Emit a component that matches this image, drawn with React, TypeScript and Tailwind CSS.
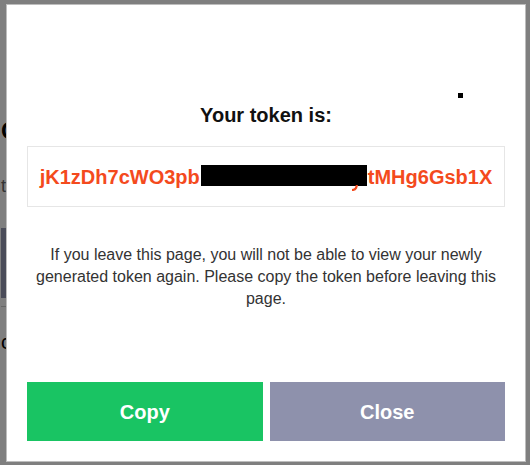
import React from 'react';

const font = { fontFamily: '"Liberation Sans", Arial, sans-serif' };

// page behind the dialog, only its left edge shows past the overlay
const Backdrop: React.FC = () => (
    <div className="w-[530px] h-[465px] bg-white overflow-hidden pl-px" style={font}>
        <h1 className="pt-[117px] text-[24px] font-bold text-black leading-[28px]">C</h1>
        <p className="mt-[30px] text-[18px] text-[#666] leading-[22px]">t</p>
        <div className="mt-[31px] h-[70px] w-[300px] bg-[#9499b2] text-white flex items-end pb-[20px] pl-[4px] text-[16px]">
            I
        </div>
        <div className="mt-[8px] border-t border-[#ccc] w-[300px]" />
        <p className="mt-[20px] text-[20px] text-black">c</p>
    </div>
);

export default function App() {
    return (
        <div className="relative w-[530px] h-[465px] overflow-hidden">
            <Backdrop />
            <div className="absolute inset-0 bg-black/50 pt-[4px] pl-[6px]" style={font}>
                <div className="relative w-[520px] h-[458px] bg-white border border-[#bdbdbd] px-[20px] pt-[98px] flex flex-col">
                    <span className="absolute left-[451px] top-[88px] w-[5px] h-[5px] bg-black" />
                    <h2 className="text-center text-[20px] font-bold text-[#111] leading-[24px]">Your token is:</h2>
                    <div className="mt-[19px] h-[61px] border border-[#e6e6e6] flex items-center justify-center text-[20px] font-bold text-[#f44a1d] whitespace-nowrap">
                        <span>jK1zDh7cWO3pb</span>
                        <span className="relative inline-block w-[166px] h-[21px] bg-black mx-px align-[-3px] translate-y-[-1px]">
                            <svg className="absolute left-[150px] top-[20px]" width="8" height="6" viewBox="0 0 8 6">
                                <path d="M6 0 L5 3 Q4 5 1 5" stroke="#f44a1d" strokeWidth="2.2" fill="none" />
                            </svg>
                        </span>
                        <span>tMHg6Gsb1X</span>
                    </div>
                    <p className="mt-[37px] text-center text-[16px] text-[#333] leading-[22px]">
                        If you leave this page, you will not be able to view your newly generated token again. Please copy the token before leaving this page.
                    </p>
                    <div className="mt-auto mb-[20px] flex gap-[7px]">
                        <button className="flex-1 h-[59px] bg-[#19c463] text-white text-[20px] font-bold">Copy</button>
                        <button className="flex-1 h-[59px] bg-[#8e91ac] text-white text-[20px] font-bold">Close</button>
                    </div>
                </div>
            </div>
        </div>
    );
}
